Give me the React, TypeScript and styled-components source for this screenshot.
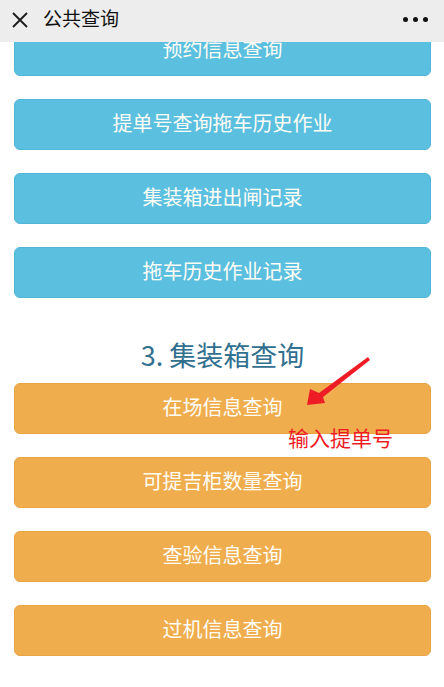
import styled, { createGlobalStyle } from "styled-components";

const GlobalStyle = createGlobalStyle`
    html, body {
        margin: 0;
        padding: 0;
        background: #ffffff;
        font-family: "Noto Sans CJK SC", "Noto Sans", "Liberation Sans", sans-serif;
    }
`;

type Tone = "info" | "warning";

const blueItems = ["预约信息查询", "提单号查询拖车历史作业", "集装箱进出闸记录", "拖车历史作业记录"];
const orangeItems = ["可提吉柜数量查询", "查验信息查询", "过机信息查询"];

const CloseIcon = () => (
    <svg width="16" height="16" viewBox="0 0 16 16">
        <path d="M1 1 L15 15 M15 1 L1 15" stroke="#1a1a1a" strokeWidth="1.8" fill="none" />
    </svg>
);

const ArrowMark = () => (
    <ArrowSvg width="75" height="58" viewBox="0 0 75 58">
        <polygon points="68,5 70,8 23,45 25,51 7,53 10,37 19,41" fill="#ee1c24" />
    </ArrowSvg>
);

const App = () => {
    return (
        <Page>
            <GlobalStyle />
            <Header>
                <CloseButton>
                    <CloseIcon />
                </CloseButton>
                <Title>公共查询</Title>
                <MoreDots>
                    <Dot />
                    <Dot />
                    <Dot />
                </MoreDots>
            </Header>
            <Scroller>
                <List>
                    {blueItems.map((t) => (
                        <QueryButton key={t} $tone="info">
                            {t}
                        </QueryButton>
                    ))}
                    <SectionTitle>3. 集装箱查询</SectionTitle>
                    <Annotated>
                        <QueryButton $tone="warning">在场信息查询</QueryButton>
                        <ArrowMark />
                        <Note>输入提单号</Note>
                    </Annotated>
                    {orangeItems.map((t) => (
                        <QueryButton key={t} $tone="warning">
                            {t}
                        </QueryButton>
                    ))}
                </List>
            </Scroller>
        </Page>
    );
};

const Page = styled.div`
    width: 444px;
    height: 687px;
    display: flex;
    flex-direction: column;
    overflow: hidden;
`;

const Header = styled.div`
    height: 42px;
    flex-shrink: 0;
    display: flex;
    align-items: center;
    padding: 0 16px 0 12px;
    background: #ededed;
    position: relative;
    z-index: 2;
`;

const CloseButton = styled.div`
    width: 16px;
    height: 16px;
    display: flex;
    margin-top: -3px;
`;

const Title = styled.div`
    margin-left: 15px;
    font-size: 19px;
    line-height: 24px;
    color: #111111;
    margin-top: -6px;
`;

const MoreDots = styled.div`
    margin-left: auto;
    display: flex;
    gap: 5px;
    margin-top: -4px;
`;

const Dot = styled.span`
    width: 5px;
    height: 5px;
    border-radius: 50%;
    background: #111111;
`;

const Scroller = styled.div`
    flex: 1;
    overflow: hidden;
`;

const List = styled.div`
    margin-top: -17px;
    padding: 0 13px 0 14px;
    display: flex;
    flex-direction: column;
`;

const QueryButton = styled.div<{ $tone: Tone }>`
    height: 51px;
    box-sizing: border-box;
    margin-bottom: 23px;
    padding-bottom: 3px;
    border-radius: 6px;
    display: flex;
    align-items: center;
    justify-content: center;
    font-size: 20px;
    line-height: 24px;
    color: #fffdf6;
    background: ${({ $tone }) => ($tone === "info" ? "#5bbfdf" : "#efad4e")};
    border: 1px solid ${({ $tone }) => ($tone === "info" ? "#4fb6d8" : "#e9a443")};
`;

const SectionTitle = styled.div`
    padding-top: 16px;
    height: 36px;
    line-height: 36px;
    margin-bottom: 10px;
    text-align: center;
    font-size: 27px;
    color: #31708f;
    box-sizing: content-box;
`;

const Annotated = styled.div`
    position: relative;
    display: flex;
    flex-direction: column;
`;

const ArrowSvg = styled.svg`
    position: absolute;
    left: 286px;
    top: -31px;
`;

const Note = styled.div`
    position: absolute;
    left: 274px;
    top: 42px;
    font-size: 21px;
    line-height: 24px;
    color: #ee1c24;
    white-space: nowrap;
`;

export default App;
